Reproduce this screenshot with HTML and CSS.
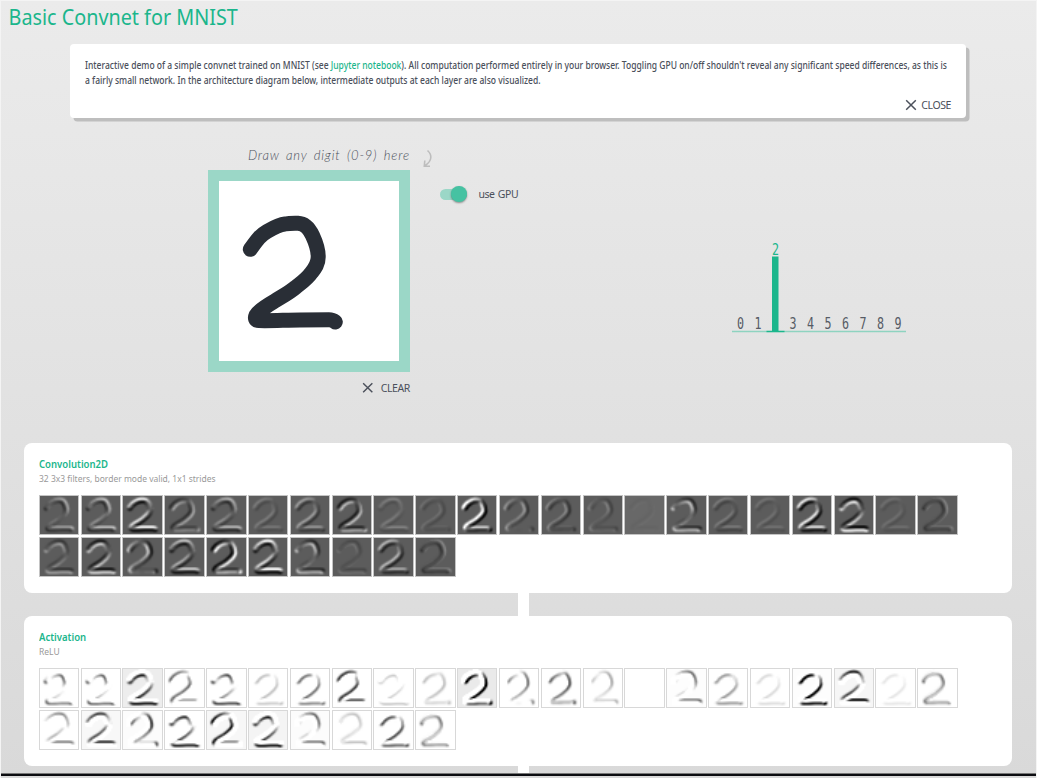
FILE: index.html
```html
<!DOCTYPE html>
<html lang="en">
<head>
<meta charset="utf-8">
<title>Basic Convnet for MNIST</title>
<link rel="stylesheet" href="styles.css">
</head>
<body>
<div class="page">
  <h1 class="title">Basic Convnet for MNIST</h1>

  <section class="info">
    <p class="info-text"><span class="line line-one">Interactive demo of a simple convnet trained on MNIST (see <a class="link">Jupyter notebook</a>). All computation performed entirely in your browser. Toggling GPU on/off shouldn't reveal any significant speed differences, as this is</span><span class="line line-two">a fairly small network. In the architecture diagram below, intermediate outputs at each layer are also visualized.</span></p>
    <div class="close">
      <svg class="cross" viewBox="0 0 12 12"><path d="M1.2 1.2 10.8 10.8M10.8 1.2 1.2 10.8"/></svg>
      <span class="close-label">CLOSE</span>
    </div>
  </section>

  <main class="demo">
    <div class="draw">
      <div class="hint">
        <span class="hint-text">Draw any digit (0-9) here</span>
        <svg class="hint-arrow" viewBox="0 0 10 20"><path d="M4.5 1.5C9.5 6 9 12 2.2 16.5M1.8 11.5 1.3 17.2 7 17.2"/></svg>
      </div>
      <div class="pad">
        <svg class="digit" viewBox="0 0 179 179"><path d="M31.3 68.3C38 59 41 54.500 48 50.500C54 47 60 43.500 66 43C71 42 75 42.300 79 42.200C86 42.500 90 47 93.500 54.500C97 62 99.300 70 99.200 76C99.200 83 96 87 92.500 91.500C88 98 82 102 77 106C70 112 62 116 55 120.500C49 124 39 131 37.200 134C35.800 137 36 139.300 40 139.600C52 140 68 139 81 139L110 138.800C114 138.800 115 140 116.300 141"/></svg>
      </div>
      <div class="clear">
        <svg class="cross" viewBox="0 0 12 12"><path d="M1.2 1.2 10.8 10.8M10.8 1.2 1.2 10.8"/></svg>
        <span class="clear-label">CLEAR</span>
      </div>
    </div>
    <div class="gpu">
      <span class="switch"><span class="knob"></span></span>
      <span class="gpu-label">use GPU</span>
    </div>
    <svg class="chart" viewBox="0 0 174 96">
      <path class="axis" d="M0 93.500H174"/>
      <path class="axis-on" d="M34.500 93.500H52.500"/>
      <rect class="bar" x="40" y="18.500" width="6.500" height="75.500"/>
      <g class="nums">
        <text transform="translate(8.500 91) scale(.78 1)">0</text>
        <text transform="translate(26 91) scale(.78 1)">1</text>
        <text class="on" transform="translate(43.500 16.500) scale(.78 1)">2</text>
        <text transform="translate(61 91) scale(.78 1)">3</text>
        <text transform="translate(78.500 91) scale(.78 1)">4</text>
        <text transform="translate(96 91) scale(.78 1)">5</text>
        <text transform="translate(113.500 91) scale(.78 1)">6</text>
        <text transform="translate(131 91) scale(.78 1)">7</text>
        <text transform="translate(148.500 91) scale(.78 1)">8</text>
        <text transform="translate(166 91) scale(.78 1)">9</text>
      </g>
    </svg>
  </main>

  <section class="layer">
    <h2 class="layer-name name-conv">Convolution2D</h2>
    <p class="layer-info info-conv">32 3x3 filters, border mode valid, 1x1 strides</p>
    <div class="tiles" id="conv"></div>
  </section>
  <div class="joint"></div>
  <section class="layer">
    <h2 class="layer-name name-act">Activation</h2>
    <p class="layer-info info-act">ReLU</p>
    <div class="tiles light" id="relu"></div>
  </section>
  <div class="joint joint-end"></div>
  <div class="floor"></div>
</div>
<script src="app.js"></script>
</body>
</html>
```
FILE: styles.css
```css
* { box-sizing: border-box; }
body {
  margin: 0;
  font-family: "Noto Sans", "Open Sans", sans-serif;
  color: #4b505b;
  background: #fff;
}
.page {
  width: 1037px;
  height: 778px;
  overflow: hidden;
  display: flex;
  flex-direction: column;
  border: 1px solid #f4f4f4;
  border-bottom-width: 0;
  background: linear-gradient(#ebebeb, #d9d9d9);
}
.title {
  margin: 0;
  width: 400px;
  height: 43px;
  padding: 2px 0 0 8px;
  font-size: 21px;
  line-height: 29px;
  font-weight: 400;
  color: #1bb68c;
  white-space: nowrap;
  transform: scaleX(.942);
  transform-origin: 0 0;
}
.info {
  flex: none;
  width: 896px;
  height: 74px;
  margin-left: 69px;
  padding: 14px 15px 0;
  border-radius: 4px;
  background: #fff;
  box-shadow: 3.5px 3.5px 0 #bebebe;
}
.info-text { margin: 0; font-size: 10px; line-height: 15px; font-weight: 500; }
.line { display: block; width: max-content; white-space: nowrap; transform-origin: 0 0; }
.line-one { transform: scaleX(.852); margin-right: -160px; }
.line-two { transform: scaleX(.853); }
.link { color: #1bb68c; }
.close {
  display: flex;
  justify-content: flex-end;
  align-items: center;
  gap: 4px;
  height: 14px;
  margin-top: 10px;
}
.cross { width: 12px; height: 12px; fill: none; stroke: #4b505b; stroke-width: 1.5; }
.close-label, .clear-label { font-size: 10.5px; line-height: 14px; letter-spacing: -0.4px; }
.demo {
  flex: none;
  height: 324.5px;
  display: flex;
  align-items: flex-start;
  padding-left: 207px;
}
.draw { width: 202px; padding-top: 26px; }
.hint { display: flex; align-items: center; height: 26px; padding-left: 40px; }
.hint-text {
  flex: none;
  width: 162px;
  margin-top: -4px;
  font: italic 300 13px/18px Lato, cursive;
  letter-spacing: 0.8px;
  word-spacing: 2.5px;
  white-space: nowrap;
}
.hint-arrow {
  flex: none;
  width: 10px;
  height: 20px;
  margin: 3px 0 0 13px;
  fill: none;
  stroke: #bdbdbd;
  stroke-width: 1.6;
}
.pad { width: 202px; height: 202px; border: 11.5px solid #9bd7c7; background: #fff; }
.digit {
  display: block;
  width: 179px;
  height: 179px;
  fill: none;
  stroke: #292e36;
  stroke-width: 15;
  stroke-linecap: round;
  stroke-linejoin: round;
}
.clear { display: flex; justify-content: flex-end; align-items: center; gap: 7px; height: 32px; }
.clear .cross { width: 11.5px; height: 11.5px; }
.gpu { display: flex; align-items: center; gap: 12px; margin: 67px 0 0 29.5px; height: 18px; width: 80.5px; }
.switch {
  flex: none;
  display: flex;
  justify-content: flex-end;
  align-items: center;
  width: 27px;
  height: 11px;
  border-radius: 6px;
  background: #9bd7c7;
}
.knob {
  flex: none;
  width: 15.5px;
  height: 15.5px;
  border-radius: 50%;
  background: #46c2a2;
  box-shadow: 0 1px 2px rgba(0, 0, 0, .4);
}
.gpu-label { flex: none; font-size: 10.5px; letter-spacing: -0.45px; word-spacing: 1px; white-space: nowrap; }
.chart { width: 174px; height: 96px; margin: 120px 0 0 212px; }
.axis { stroke: #8ed3c0; stroke-width: 1.3; }
.axis-on { stroke: #1bb68c; stroke-width: 1.4; }
.bar { fill: #1bb68c; }
.nums { font: 15px "DejaVu Sans Mono", monospace; text-anchor: middle; fill: #565b65; }
.nums .on { fill: #1bb68c; }
.layer {
  flex: none;
  width: 988px;
  height: 150.5px;
  margin-left: 23px;
  padding: 13px 0 0 14.5px;
  border-radius: 8px;
  background: #fff;
}
.layer-name, .layer-info { margin: 0; width: max-content; transform-origin: 0 0; }
.layer-name { font-size: 10.8px; line-height: 15px; font-weight: 600; color: #1bb68c; transform: scaleX(.885); }
.layer-info { font-size: 9.5px; line-height: 15px; color: #999; transform: scaleX(.893); }
.tiles { display: flex; flex-wrap: wrap; gap: 1.6px 1.44px; padding: 9.5px 0 0 .3px; width: 926px; }
.tile { width: 40.4px; height: 40.4px; border: 1px solid #c4c4c4; }
.light .tile { border-color: #d8d8d8; }
.joint { flex: none; width: 11px; height: 22.5px; margin-left: 517px; background: #fff; }
.joint-end { height: 7px; }
.floor { flex: none; height: 3px; background: #0b0c10; border-top: 1px solid #777; }
```
FILE: app.js
```js
// Each filter: [light dx, light dy, strength, stroke tint, relu gain, relu bias]
const filters = [
  [.6, -.6, .6, 0, 1.2, 0], [.5, -.7, .7, .12, 1.2, 0], [-.1, -1, .9, .08, 1, .08], [.7, .4, .6, -.03, 1.2, 0],
  [.4, -.8, .65, 0, 1.3, 0], [-.6, -.7, .22, 0, 1.2, 0], [-.5, -.6, .55, 0, 1.3, 0], [.6, .6, .8, -.1, 1.1, 0],
  [0, -1, .18, .08, 1.4, 0], [-.5, -.2, .3, -.08, 1.2, 0], [-.9, -.5, 1.1, .2, 1.1, .09], [-.7, 0, .6, 0, 1.3, 0],
  [-.6, -.1, .6, -.15, 1.5, 0], [-.6, .2, .4, -.05, 1.2, 0], [.4, .4, .06, -.02, 0, 0], [-.6, .6, .75, .1, 1, .01],
  [-.3, -.6, .35, -.08, 1.4, 0], [-.3, -.5, .25, 0, 1, 0], [-.6, -.8, .95, 0, 1.2, .01], [-.1, 1, .9, .05, 1, .04],
  [-.3, -.5, .22, 0, .8, 0], [.5, -.2, .6, -.2, 1.2, 0], [-.3, .7, .55, 0, 1.1, 0], [.1, .9, .8, 0, 1, .03],
  [-.9, .1, .8, 0, 1.1, .015], [.1, -.9, .8, -.1, 1.1, 0], [.9, .4, 1.05, .1, 1, .035], [.1, -1, .95, .12, 1, .05],
  [-.6, .6, .75, .05, 1, .015], [-.3, .4, .35, -.1, 1, 0], [-.5, -.6, .8, -.05, 1.1, 0], [.5, -.3, .6, -.2, 1.1, 0]
];

// Rasterize the drawn digit into the 28x28 network input
const stroke = document.querySelector('.digit path').getAttribute('d');
const input = document.createElement('canvas');
input.width = input.height = 28;
const pen = input.getContext('2d');
pen.setTransform(.2, 0, 0, .2, -.8, -4.5);
pen.lineWidth = 13;
pen.lineCap = pen.lineJoin = 'round';
pen.stroke(new Path2D(stroke));
const data = pen.getImageData(0, 0, 28, 28).data;
const px = (x, y) => data[(y * 28 + x) * 4 + 3] / 255;

function tile(parent, shade) {
  const c = document.createElement('canvas');
  c.width = c.height = 26;
  c.className = 'tile';
  const ctx = c.getContext('2d');
  const out = ctx.createImageData(26, 26);
  for (let y = 0; y < 26; y++) {
    for (let x = 0; x < 26; x++) {
      const i = (y * 26 + x) * 4;
      out.data[i] = out.data[i + 1] = out.data[i + 2] = shade(x + 1, y + 1);
      out.data[i + 3] = 255;
    }
  }
  ctx.putImageData(out, 0, 0);
  document.getElementById(parent).appendChild(c);
}

filters.forEach(([dx, dy, amp, tint, gain, bias], n) => {
  const value = (x, y) => {
    const gx = (px(x + 1, y) - px(x - 1, y)) * 2 + px(x + 1, y + 1) - px(x - 1, y + 1) + px(x + 1, y - 1) - px(x - 1, y - 1);
    const gy = (px(x, y + 1) - px(x, y - 1)) * 2 + px(x + 1, y + 1) - px(x + 1, y - 1) + px(x - 1, y + 1) - px(x - 1, y - 1);
    return -(gx * dx + gy * dy) / 4 * amp + tint * px(x, y);
  };
  const base = n === 14 ? 104 : 92;
  tile('conv', (x, y) => {
    const v = value(x, y);
    return base + v * (v > 0 ? 135 : 80);
  });
  tile('relu', (x, y) => 255 - 230 * Math.max(0, -value(x, y) * gain + bias));
});
```
